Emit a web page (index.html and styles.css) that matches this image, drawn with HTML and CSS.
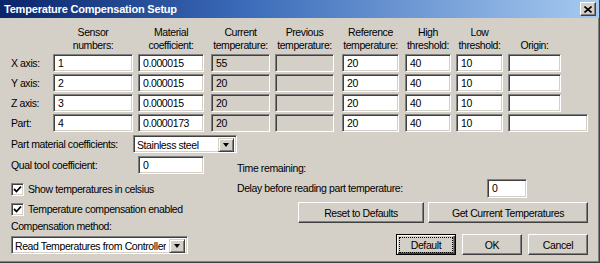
FILE: index.html
```html
<html>
<head>
<title>Temperature Compensation Setup</title>
<link rel="stylesheet" href="styles.css">
</head>
<body>
<div class="window">
	<div class="titlebar">
		<span class="title">Temperature Compensation Setup</span>
		<span class="close"><svg width="8" height="7" viewBox="0 0 8 7"><path d="M0.5 0.5 L7.5 6.5 M7.5 0.5 L0.5 6.5" stroke="#000" stroke-width="1.6"/></svg></span>
	</div>
	<div class="content">
		<div class="grid">
			<div></div>
			<div class="head w-sensor">Sensor<br>numbers:</div>
			<div class="head w-mat">Material<br>coefficient:</div>
			<div class="head w-cur">Current<br>temperature:</div>
			<div class="head w-prev">Previous<br>temperature:</div>
			<div class="head w-ref">Reference<br>temperature:</div>
			<div class="head w-high">High<br>threshold:</div>
			<div class="head w-low">Low<br>threshold:</div>
			<div class="head w-origin"><br>Origin:</div>

			<div class="rowlabel">X axis:</div>
			<div class="field w-sensor">1</div>
			<div class="field w-mat">0.000015</div>
			<div class="field off w-cur">55</div>
			<div class="field off w-prev"></div>
			<div class="field w-ref">20</div>
			<div class="field w-high">40</div>
			<div class="field w-low">10</div>
			<div class="field w-origin"></div>

			<div class="rowlabel">Y axis:</div>
			<div class="field w-sensor">2</div>
			<div class="field w-mat">0.000015</div>
			<div class="field off w-cur">20</div>
			<div class="field off w-prev"></div>
			<div class="field w-ref">20</div>
			<div class="field w-high">40</div>
			<div class="field w-low">10</div>
			<div class="field w-origin"></div>

			<div class="rowlabel">Z axis:</div>
			<div class="field w-sensor">3</div>
			<div class="field w-mat">0.000015</div>
			<div class="field off w-cur">20</div>
			<div class="field off w-prev"></div>
			<div class="field w-ref">20</div>
			<div class="field w-high">40</div>
			<div class="field w-low">10</div>
			<div class="field w-origin"></div>

			<div class="rowlabel">Part:</div>
			<div class="field w-sensor">4</div>
			<div class="field w-mat">0.0000173</div>
			<div class="field off w-cur">20</div>
			<div class="field off w-prev"></div>
			<div class="field w-ref">20</div>
			<div class="field w-high">40</div>
			<div class="field w-low">10</div>
			<div class="field w-origin-wide"></div>
		</div>

		<div class="lower">
			<div class="left">
				<div class="line first">
					<div class="lbl">Part material coefficients:</div>
					<div class="combo w-steel"><span class="val">Stainless steel</span><span class="drop"><i></i></span></div>
				</div>
				<div class="line">
					<div class="lbl">Qual tool coefficient:</div>
					<div class="field w-mat">0</div>
				</div>
				<div class="check first-check"><span class="box"><svg width="9" height="9" viewBox="0 0 9 9"><path d="M1 4 L3.5 6.5 L8 1.5" fill="none" stroke="#000" stroke-width="1.8"/></svg></span>Show temperatures in celsius</div>
				<div class="check"><span class="box"><svg width="9" height="9" viewBox="0 0 9 9"><path d="M1 4 L3.5 6.5 L8 1.5" fill="none" stroke="#000" stroke-width="1.8"/></svg></span>Temperature compensation enabled</div>
				<div class="method">Compensation method:</div>
				<div class="combo w-method"><span class="val">Read Temperatures from Controller</span><span class="drop"><i></i></span></div>
			</div>
			<div class="right">
				<div class="time">Time remaining:</div>
				<div class="delay">
					<div class="delay-lbl">Delay before reading part temperature:</div>
					<div class="field w-delay">0</div>
				</div>
				<div class="btnrow">
					<div class="btn w-reset">Reset to Defaults</div>
					<div class="btn w-get">Get Current Temperatures</div>
				</div>
				<div class="btnrow bottom">
					<div class="btn default w-ok"><span class="focus">Default</span></div>
					<div class="btn w-ok">OK</div>
					<div class="btn w-ok">Cancel</div>
				</div>
			</div>
		</div>
	</div>
</div>
</body>
</html>
```
FILE: styles.css
```css
html, body {
	margin: 0;
	padding: 0;
	background: #d4d0c8;
}
body {
	font-family: "Liberation Sans", Arial, sans-serif;
	font-size: 10.5px;
	letter-spacing: -0.4px;
	color: #000;
}
.window {
	width: 600px;
	height: 263px;
	box-sizing: border-box;
	border-right: 1px solid #404040;
	border-bottom: 1px solid #404040;
	box-shadow: inset -1px -1px #808080;
}
.titlebar {
	height: 18px;
	background: linear-gradient(to right, #0a246a 0%, #3a6ab8 40%, #a6caf0 100%);
	display: flex;
	align-items: center;
	justify-content: space-between;
	padding: 0 3px 0 4px;
}
.title {
	color: #fff;
	font-weight: bold;
	font-size: 11px;
	letter-spacing: -0.2px;
}
.close {
	width: 16px;
	height: 14px;
	box-sizing: border-box;
	background: #d4d0c8;
	border: 1px solid;
	border-color: #fff #404040 #404040 #fff;
	box-shadow: inset -1px -1px #808080;
	display: flex;
	align-items: center;
	justify-content: center;
}
.content {
	padding: 8px 11px 0 11px;
}

/* table of axes */
.grid {
	display: grid;
	grid-template-columns: 42px 85px 73px 64px 67px 63px 51px 52px 80px;
	grid-template-rows: 26px 18px 18px 18px 18px;
	row-gap: 2px;
}
.head {
	text-align: center;
	line-height: 13px;
}
.rowlabel {
	line-height: 18px;
}
.field {
	height: 18px;
	box-sizing: border-box;
	background: #fff;
	border: 1px solid;
	border-color: #808080 #fff #fff #808080;
	box-shadow: inset 1px 1px #404040, inset -1px -1px #d4d0c8;
	padding: 0 0 0 4px;
	line-height: 16px;
	white-space: nowrap;
	overflow: hidden;
}
.field.off {
	background: #d4d0c8;
}
.w-sensor { width: 80px; }
.w-mat { width: 66px; }
.w-cur { width: 59px; }
.w-prev { width: 59px; }
.w-ref { width: 57px; }
.w-high { width: 46px; }
.w-low { width: 47px; }
.w-origin { width: 53px; }
.w-origin-wide { width: 80px; }
.w-steel { width: 108px; }
.w-method { width: 177px; }
.w-delay { width: 40px; height: 19px; }

/* lower part */
.lower {
	display: flex;
}
.left {
	width: 226px;
}
.right {
	width: 351px;
}
.line {
	display: flex;
	align-items: center;
	height: 18px;
	margin-top: 3px;
}
.lbl {
	width: 127px;
	white-space: nowrap;
}
.combo {
	height: 18px;
	box-sizing: border-box;
	background: #fff;
	border: 1px solid;
	border-color: #808080 #fff #fff #808080;
	box-shadow: inset 1px 1px #404040, inset -1px -1px #d4d0c8;
	display: flex;
	justify-content: space-between;
	padding: 2px 2px 2px 3px;
}
.combo .val {
	line-height: 14px;
	white-space: nowrap;
	overflow: hidden;
}
.drop {
	flex: none;
	width: 16px;
	height: 14px;
	box-sizing: border-box;
	background: #d4d0c8;
	border: 1px solid;
	border-color: #d4d0c8 #404040 #404040 #d4d0c8;
	box-shadow: inset 1px 1px #fff, inset -1px -1px #808080;
	display: flex;
	align-items: center;
	justify-content: center;
}
.drop i {
	width: 0;
	height: 0;
	border-left: 3.5px solid transparent;
	border-right: 3.5px solid transparent;
	border-top: 4px solid #000;
}
.check {
	display: flex;
	align-items: center;
	height: 20px;
}
.check.first-check {
	margin-top: 5px;
}
.box {
	width: 13px;
	height: 13px;
	box-sizing: border-box;
	background: #fff;
	border: 1px solid;
	border-color: #808080 #fff #fff #808080;
	box-shadow: inset 1px 1px #404040, inset -1px -1px #d4d0c8;
	display: flex;
	align-items: center;
	justify-content: center;
	margin-right: 4px;
}
.method {
	line-height: 13px;
	margin-top: 1px;
}
.method + .combo {
	margin-top: 3px;
}
.time {
	line-height: 13px;
	margin-top: 30px;
}
.delay {
	display: flex;
	align-items: center;
	margin-top: 3px;
	height: 20px;
}
.delay-lbl {
	width: 250px;
}
.btnrow {
	display: flex;
	justify-content: flex-end;
	gap: 4px;
	margin-top: 4px;
}
.btnrow.bottom {
	margin-top: 11px;
	gap: 6px;
}
.btn {
	height: 21px;
	box-sizing: border-box;
	border: 1px solid;
	border-color: #fff #404040 #404040 #fff;
	box-shadow: inset -1px -1px #808080;
	display: flex;
	align-items: center;
	justify-content: center;
}
.w-reset { width: 126px; }
.w-get { width: 160px; }
.w-ok { width: 60px; }
.btn.default {
	border: 1px solid #000;
	box-shadow: inset 1px 1px #fff, inset -1px -1px #404040, inset -2px -2px #808080;
}
.focus {
	border: 1px dotted #000;
	padding: 1px 4px;
	line-height: 12px;
	width: 44px;
	text-align: center;
}
```
